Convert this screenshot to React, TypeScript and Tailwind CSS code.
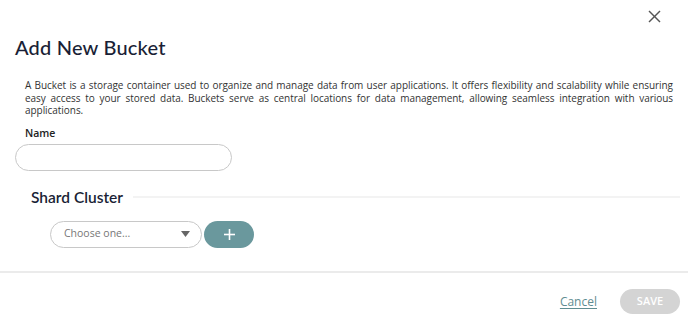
import React from "react";

const App: React.FC = () => {
    return (
        <div className="relative w-[688px] h-[336px] bg-white font-['Open_Sans',sans-serif] text-[#333]">
            {/* close */}
            <button className="absolute left-[648px] top-[10px] w-[13px] h-[13px] text-[#555]">
                <svg viewBox="0 0 13 13" width="13" height="13" stroke="currentColor" strokeWidth="1.4">
                    <line x1="1" y1="1" x2="12" y2="12" />
                    <line x1="12" y1="1" x2="1" y2="12" />
                </svg>
            </button>

            <div className="pt-[35px] px-[15px]">
                <h1 className="font-['Lato',sans-serif] text-[20px] leading-[24px] font-medium text-[#1a1f36] tracking-[0.2px]">
                    Add New Bucket
                </h1>

                <p className="mt-[20px] ml-[10px] text-[10px] leading-[12.5px] tracking-[-0.05px] text-justify w-[648px]">
                    A Bucket is a storage container used to organize and manage data from user applications. It offers flexibility and scalability while ensuring easy access to your stored data. Buckets serve as central locations for data management, allowing seamless integration with various applications.
                </p>

                <label className="block mt-[9px] ml-[10px] text-[10.5px] leading-[14px] font-semibold text-[#222]">
                    Name
                </label>
                <input
                    type="text"
                    className="mt-[4px] block w-[217px] h-[27px] rounded-full border border-[#c8c8c8] px-3 text-[11px] focus:outline-none"
                />

                <div className="mt-[16px] ml-[16px] flex items-center gap-[10px]">
                    <h2 className="font-['Lato',sans-serif] text-[15.5px] leading-[20px] font-semibold text-[#1a1f36] whitespace-nowrap">
                        Shard Cluster
                    </h2>
                    <div className="flex-1 h-[2px] bg-[#f3f3f3] mr-[-7px]" />
                </div>

                <div className="mt-[14px] ml-[35px] flex items-center gap-[2px]">
                    <div className="flex items-center justify-between w-[152px] h-[27px] rounded-full border border-[#c8c8c8] pl-[13px] pr-[11px]">
                        <span className="text-[10.5px] text-[#777]">Choose one...</span>
                        <svg width="9" height="6" viewBox="0 0 9 6">
                            <path d="M0 0 L9 0 L4.5 6 Z" fill="#666" />
                        </svg>
                    </div>
                    <button className="flex items-center justify-center w-[50px] h-[27px] rounded-full bg-[#6a989d] text-white">
                        <svg width="11" height="11" viewBox="0 0 11 11" stroke="currentColor" strokeWidth="1.6">
                            <line x1="5.5" y1="0" x2="5.5" y2="11" />
                            <line x1="0" y1="5.5" x2="11" y2="5.5" />
                        </svg>
                    </button>
                </div>
            </div>

            <div className="absolute left-0 right-0 top-[271px] h-[2px] bg-[#ebebeb]" />

            <div className="absolute right-[8px] top-[289px] flex items-center gap-[23px]">
                <a className="text-[12px] text-[#5f8d92] underline underline-offset-2 cursor-pointer">Cancel</a>
                <button className="w-[60px] h-[25px] rounded-full bg-[#d4d4d4] text-white text-[11px] font-semibold">
                    SAVE
                </button>
            </div>
        </div>
    );
};

export default App;
